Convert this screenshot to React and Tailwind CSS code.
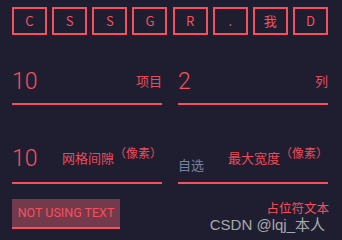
const chars = ["C", "S", "S", "G", "R", ".", "我", "D"];

const cjk = { fontFamily: '"Noto Sans CJK SC", "Noto Sans", sans-serif' };
const num = { fontFamily: 'Roboto, "Liberation Sans", sans-serif' };

function Field({ value, placeholder, label, unit, tight }) {
  return (
    <div
      className={
        "flex items-end justify-between border-b-2 border-[#f6505e] h-[38px] " +
        (tight ? "pb-[12px]" : "pb-[10px]")
      }
    >
      {value ? (
        <span className="text-[23px] font-light leading-none text-[#f6505e]" style={num}>
          {value}
        </span>
      ) : (
        <span className="text-[13px] leading-none text-[#7484a0] mb-[-1px]" style={cjk}>
          {placeholder}
        </span>
      )}
      <span className="flex items-end leading-none" style={cjk}>
        <span className="text-[13px] leading-none text-[#e94b5b] mb-[6px]">{label}</span>
        {unit && <span className="text-[12px] leading-none text-[#e94b5b] mb-[11px]">{unit}</span>}
      </span>
    </div>
  );
}

export default function App() {
  return (
    <div className="relative w-[342px] h-[240px] overflow-hidden bg-[#1f1e30] px-3 pt-[7px]">
      <div className="flex justify-between w-[316px]">
        {chars.map((c, i) => (
          <div
            key={i}
            className="w-[35px] h-[28px] border-2 border-[#f6505e] flex items-center justify-center text-[13px] text-[#f6505e]"
            style={cjk}
          >
            {c}
          </div>
        ))}
      </div>

      <div className="grid grid-cols-2 gap-4 w-[316px] mt-[32px]">
        <Field value="10" label="项目" />
        <Field value="2" label="列" />
      </div>

      <div className="grid grid-cols-2 gap-4 w-[316px] mt-[41px]">
        <Field value="10" label="网格间隙" unit="（像素）" tight />
        <Field placeholder="自选" label="最大宽度" unit="（像素）" tight />
      </div>

      <div className="flex justify-between items-start w-[317px] mt-[15px]">
        <button
          className="w-[108px] h-[30px] bg-[#733a4c] border-b-2 border-[#f6505e] text-[12.5px] text-[#f6505e]"
          style={num}
        >
          NOT USING TEXT
        </button>
        <span className="text-[12.5px] leading-none text-[#f6505e] mt-[3px]" style={cjk}>
          占位符文本
        </span>
      </div>

      <div
        className="absolute right-[17px] bottom-[8px] text-[15px] leading-none text-[#a8a8ad]"
        style={{ fontFamily: '"Liberation Sans", "Noto Sans CJK SC", sans-serif' }}
      >
        CSDN @lqj_本人
      </div>
    </div>
  );
}
